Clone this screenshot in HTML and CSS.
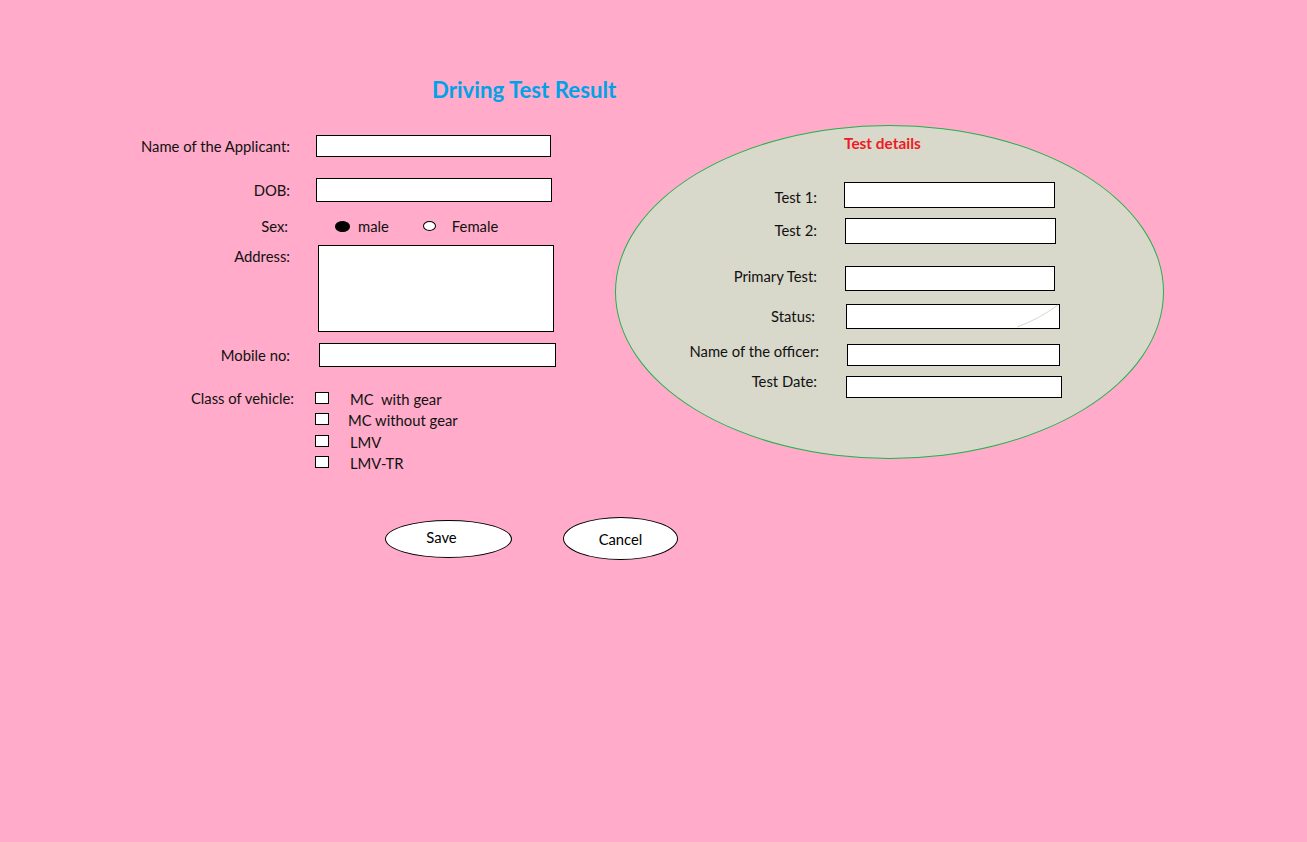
FILE: index.html
```html
<!DOCTYPE html>
<html lang="en">
<head>
<meta charset="utf-8">
<title>Driving Test Result</title>
<link rel="stylesheet" href="styles.css">
</head>
<body>
<div class="page">
  <h1 class="title">Driving Test Result</h1>
  <div class="content">
    <form class="applicant">
      <div class="row row-name">
        <span class="label">Name of the Applicant:</span>
        <span class="box box-name"></span>
      </div>
      <div class="row row-dob">
        <span class="label">DOB:</span>
        <span class="box box-dob"></span>
      </div>
      <div class="row row-sex">
        <span class="label label-sex">Sex:</span>
        <span class="radios">
          <span class="radio radio-on"></span><span class="radio-text">male</span>
          <span class="radio radio-off"></span><span class="radio-text">Female</span>
        </span>
      </div>
      <div class="row row-address">
        <span class="label">Address:</span>
        <span class="box box-address"></span>
      </div>
      <div class="row row-mobile">
        <span class="label">Mobile no:</span>
        <span class="box box-mobile"></span>
      </div>
      <div class="row row-class">
        <span class="label label-class">Class of vehicle:</span>
        <ul class="checks">
          <li class="check"><span class="checkbox"></span><span class="check-text">MC&nbsp; with gear</span></li>
          <li class="check check-2"><span class="checkbox"></span><span class="check-text">MC without gear</span></li>
          <li class="check"><span class="checkbox"></span><span class="check-text">LMV</span></li>
          <li class="check"><span class="checkbox"></span><span class="check-text">LMV-TR</span></li>
        </ul>
      </div>
      <div class="actions">
        <span class="btn btn-save">Save</span>
        <span class="btn btn-cancel">Cancel</span>
      </div>
    </form>
    <section class="panel">
      <h2 class="panel-title">Test details</h2>
      <div class="prow prow-1">
        <span class="plabel">Test 1:</span>
        <span class="box pbox-1"></span>
      </div>
      <div class="prow prow-2">
        <span class="plabel">Test 2:</span>
        <span class="box pbox-2"></span>
      </div>
      <div class="prow prow-3">
        <span class="plabel">Primary Test:</span>
        <span class="box pbox-3"></span>
      </div>
      <div class="prow prow-4">
        <span class="plabel plabel-status">Status:</span>
        <span class="box pbox-4">
          <svg class="scratch" width="214" height="25" viewBox="0 0 214 25"><path d="M171 23 Q193 15 212 1" fill="none" stroke="#d8d8cb" stroke-width="1"/></svg>
        </span>
      </div>
      <div class="prow prow-5">
        <span class="plabel plabel-wide">Name of the officer:</span>
        <span class="box pbox-5"></span>
      </div>
      <div class="prow prow-6">
        <span class="plabel">Test Date:</span>
        <span class="box pbox-6"></span>
      </div>
    </section>
  </div>
</div>
</body>
</html>
```

FILE: styles.css
```css
html, body {
  margin: 0;
  padding: 0;
}

body {
  background: #ffabc9;
  min-height: 842px;
  font-family: Lato, "Open Sans", sans-serif;
  font-size: 14.8px;
  color: #111;
}

.page {
  width: 1307px;
  height: 842px;
  overflow: hidden;
}

.title {
  margin: 0;
  padding: 77px 0 0 432px;
  font-size: 22.2px;
  line-height: 26px;
  font-weight: 700;
  color: #00a2e8;
}

.content {
  display: flex;
  margin-top: 22px;
}

/* ---------- left form ---------- */
.applicant {
  width: 615px;
  flex: none;
  padding-top: 10px;
  margin: 0;
}

.row {
  display: flex;
  align-items: center;
}

.label {
  width: 290px;
  flex: none;
  text-align: right;
  line-height: 18px;
}

.box {
  display: block;
  box-sizing: border-box;
  background: #fff;
  border: 1px solid #000;
  flex: none;
}

.box-name { width: 235px; height: 22px; margin-left: 26px; }

.row-dob { margin-top: 21px; }
.box-dob { width: 236px; height: 24px; margin-left: 26px; }

.row-sex { margin-top: 15px; height: 18px; }
.label-sex { width: 288px; }
.radios {
  display: flex;
  align-items: center;
  margin-left: 47px;
}
.radio {
  display: block;
  box-sizing: border-box;
  border: 1px solid #000;
  border-radius: 50%;
  flex: none;
}
.radio-on { width: 15px; height: 11px; background: #000; }
.radio-off { width: 13px; height: 10px; background: #fff; margin-left: 34px; }
.radio-text { margin-left: 8px; }
.radio-off + .radio-text { margin-left: 16px; }

.row-address { margin-top: 10px; align-items: flex-start; }
.row-address .label { margin-top: 2px; }
.box-address { width: 236px; height: 87px; margin-left: 28px; }

.row-mobile { margin-top: 11px; }
.box-mobile { width: 237px; height: 24px; margin-left: 29px; }

.row-class { margin-top: 21px; align-items: flex-start; }
.label-class { width: 294px; line-height: 21px; }

.checks {
  list-style: none;
  margin: 0 0 0 21px;
  padding: 0;
}
.check {
  display: flex;
  align-items: center;
  height: 21px;
}
.check-2 { height: 22px; }
.checkbox {
  display: block;
  box-sizing: border-box;
  width: 14px;
  height: 12px;
  background: #fff;
  border: 1px solid #000;
  margin-top: -2px;
  flex: none;
}
.check-text { margin-left: 21px; }
.check-2 .check-text { margin-left: 19px; }

.actions {
  display: flex;
  align-items: center;
  gap: 51px;
  margin: 44px 0 0 385px;
}
.btn {
  display: flex;
  align-items: center;
  justify-content: center;
  flex: none;
  box-sizing: border-box;
  background: #fff;
  border: 1px solid #000;
  border-radius: 50%;
  color: #000;
}
.btn-save { width: 127px; height: 38px; padding: 0 14px 3px 0; }
.btn-cancel { width: 115px; height: 43px; }

/* ---------- right panel ---------- */
.panel {
  box-sizing: border-box;
  width: 549px;
  height: 334px;
  flex: none;
  background: #d8d8cb;
  border: 1px solid #22b14c;
  border-radius: 50%;
  padding-top: 8px;
}

.panel-title {
  margin: 0 0 0 228px;
  font-size: 15.4px;
  line-height: 18px;
  font-weight: 700;
  color: #ed1c24;
}

.prow {
  display: flex;
  align-items: flex-start;
}
.plabel {
  width: 201px;
  flex: none;
  text-align: right;
  line-height: 18px;
}
.plabel-status { width: 199px; }
.plabel-wide { width: 203px; }

.prow-1 { margin-top: 30px; }
.prow-1 .plabel { margin-top: 6px; }
.pbox-1 { width: 211px; height: 26px; margin-left: 27px; }

.prow-2 { margin-top: 10px; }
.prow-2 .plabel { margin-top: 3px; }
.pbox-2 { width: 211px; height: 26px; margin-left: 28px; }

.prow-3 { margin-top: 22px; }
.prow-3 .plabel { margin-top: 1px; }
.pbox-3 { width: 210px; height: 25px; margin-left: 28px; }

.prow-4 { margin-top: 13px; }
.prow-4 .plabel { margin-top: 3px; }
.pbox-4 { width: 214px; height: 25px; margin-left: 31px; position: relative; }

.prow-5 { margin-top: 15px; }
.prow-5 .plabel { margin-top: -2px; }
.pbox-5 { width: 213px; height: 22px; margin-left: 28px; }

.prow-6 { margin-top: 10px; }
.prow-6 .plabel { margin-top: -4px; }
.pbox-6 { width: 216px; height: 22px; margin-left: 29px; }

.scratch {
  position: absolute;
  left: -1px;
  top: -1px;
}
```
